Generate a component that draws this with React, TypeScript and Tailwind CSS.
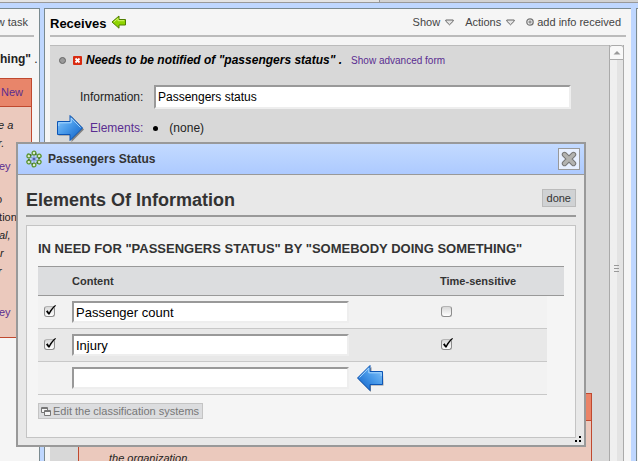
import type { ReactNode } from "react";

const font = "font-['Liberation_Sans',Arial,sans-serif]";
const sunken =
  "border-2 border-t-[#999] border-l-[#999] border-r-[#eee] border-b-[#eee] bg-white text-black outline-none";

function BlueArrow({ flip = false }: { flip?: boolean }) {
  const id = flip ? "arrowLeft" : "arrowRight";
  return (
    <svg width="28" height="28" viewBox="0 0 28 28" className="shrink-0" aria-hidden="true">
      <defs>
        <linearGradient id={id} x1="0" y1="0" x2="1" y2="1">
          <stop offset="0" stopColor="#8cc8fa" />
          <stop offset="0.45" stopColor="#4a9bea" />
          <stop offset="1" stopColor="#0a5cc4" />
        </linearGradient>
      </defs>
      <path
        d={flip ? "M27 8.500H15.500V3L2.500 15.500L15 28V21.500H27.500Z" : "M2.500 8.500H15.500V2L28 15.500L15.500 28V21.500H2.500Z"}
        fill="#000"
        opacity="0.4"
      />
      <g transform={flip ? "translate(28 0) scale(-1 1)" : undefined}>
        <path d="M1.500 7.500H14V1.500L26.500 14L14 26.500V20.500H1.500Z" fill={`url(#${id})`} stroke="#0c55b5" />
        <path d="M2.800 12V8.800H15.200V4L24.500 13.500" fill="none" stroke="#a5d6ff" strokeWidth="1" />
      </g>
    </svg>
  );
}

function GreenArrow() {
  return (
    <svg width="16" height="14" viewBox="0 0 16 14" aria-hidden="true">
      <path d="M1 7L8 1V4.500H14.500V10H8V13.200Z" fill="#8fd400" stroke="#4f7d00" />
      <path d="M2.800 7L7 3.400V5.700H13.300" fill="none" stroke="#d2f56c" />
    </svg>
  );
}

function Caret() {
  return (
    <svg width="9" height="7" viewBox="0 0 9 7" aria-hidden="true">
      <path d="M0.800 1H8.200V2.200L4.500 5.800L0.800 2.200Z" fill="#e4e4e4" stroke="#666" />
    </svg>
  );
}

function Flower() {
  const petals = [0, 60, 120, 180, 240, 300];
  return (
    <svg width="18" height="18" viewBox="0 0 18 18" aria-hidden="true">
      {petals.map((a) => (
        <g key={a} transform={`rotate(${a} 9 9)`}>
          <path d="M9 9V5" stroke="#7f9cc8" />
          <circle cx="9" cy="3" r="1.900" fill="#dcebd0" stroke="#5c9632" strokeWidth="1.300" />
          <circle cx="10.900" cy="4.200" r="0.900" fill="#47702c" />
        </g>
      ))}
      <circle cx="9" cy="9" r="1.900" fill="#8c9fd8" />
      <circle cx="9" cy="9" r="0.900" fill="#3a3f96" />
    </svg>
  );
}

function Tick({ label, checked = false }: { label: string; checked?: boolean }) {
  return (
    <span className="relative mb-[2px] block size-[11px]">
      <input
        type="checkbox"
        aria-label={label}
        defaultChecked={checked}
        className="peer block size-[11px] appearance-none rounded-[3px] border border-[#8d8d8d] border-t-[#b5b5b5] bg-linear-to-b from-[#d8d8d8] to-white"
      />
      <svg
        viewBox="0 0 13 12"
        width="13"
        height="12"
        className="pointer-events-none absolute -top-px left-0 hidden peer-checked:block"
        aria-hidden="true"
      >
        <path d="M2 6.500L3.600 5.300L5 7.500C6.500 4.500 8.500 2 11.300 0L12 0.800C9 3.500 7 6.500 5.600 9.500H4.300Z" fill="#000" />
      </svg>
    </span>
  );
}

function MenuButton({ children }: { children: ReactNode }) {
  return (
    <button type="button" className="flex items-center gap-[5px]">
      {children}
      <Caret />
    </button>
  );
}

function TaskPanel() {
  return (
    <aside className="w-10 shrink-0 overflow-hidden border-t border-r border-[#7a8a90] bg-[#f5f5f5] whitespace-nowrap">
      <header className="mr-[5px] flex h-7 items-center justify-end border-b-2 border-[#bbb] pr-[6px]">
        <button type="button" className="text-[11px] text-[#444]">w task</button>
      </header>
      <p className="mt-[14px] mr-[5px] text-[12px] leading-4 font-bold">
        hing" <span className="font-normal">.</span>
      </p>
      <section className="mt-[11px] mr-[7px] h-[260px] border border-l-0 border-[#c0492f] bg-[#ebc9bd] text-[11px] leading-[18px]">
        <div className="h-[28px] border-b border-[#c0492f] bg-[#e8856a] pl-px leading-[27px]">
          <a href="#new" className="text-[#5a2d91]">New</a>
        </div>
        <p className="pt-[9px] -indent-[2px] italic">e a</p>
        <p className="-indent-[2px] italic">r.</p>
        <a href="#survey" className="mt-[5px] block -indent-px text-[#5a2d91]">ey</a>
        <p className="mt-[15px] -indent-[4px]">o</p>
        <p className="-indent-[7px]">ation</p>
        <p className="-indent-px italic">al,</p>
        <p className="italic">r</p>
        <p className="-indent-[2px] italic">r</p>
        <a href="#survey-2" className="mt-[23px] block -indent-px text-[#5a2d91]">ey</a>
      </section>
    </aside>
  );
}

function ScrollBar() {
  return (
    <div className="flex w-[15px] shrink-0 flex-col border-x border-[#aaa] bg-linear-to-r from-[#efefef] from-50% to-[#e3e3e3] to-50%">
      <button
        type="button"
        aria-label="Scroll up"
        className="-mx-px flex h-[15px] shrink-0 items-center justify-center rounded-t-[3px] border border-[#aaa] bg-[#f8f8f8]"
      >
        <svg width="8" height="5" viewBox="0 0 8 5" aria-hidden="true">
          <path d="M0.500 4.500L4 1L7.500 4.500Z" fill="#999" />
        </svg>
      </button>
      <div className="mt-[205px] ml-1 flex flex-col gap-[2px]">
        <i className="h-px w-[5px] bg-[#999]" />
        <i className="h-px w-[5px] bg-[#999]" />
        <i className="h-px w-[5px] bg-[#999]" />
      </div>
    </div>
  );
}

function ReceivesPanel() {
  return (
    <main className="flex min-w-0 flex-1 flex-col overflow-hidden border-t border-l border-[#7a8a90] bg-[#f5f5f5] pr-[5px] pl-[5px]">
      <header className="flex h-7 shrink-0 items-center border-b-2 border-[#bbb] pr-[5px] text-[11px] text-[#444]">
        <h2 className="mr-[5px] pt-[3px] text-[13px] font-bold text-black">Receives</h2>
        <GreenArrow />
        <nav className="ml-auto flex items-center gap-[11px]">
          <MenuButton>Show</MenuButton>
          <MenuButton>Actions</MenuButton>
          <button type="button" className="flex items-center gap-[3px]">
            <svg width="8" height="8" viewBox="0 0 8 8" aria-hidden="true">
              <circle cx="4" cy="4" r="3.200" fill="#eee" stroke="#777" strokeWidth="1.300" />
              <path d="M4 2.300V5.700M2.300 4H5.700" stroke="#777" />
            </svg>
            add info received
          </button>
        </nav>
      </header>
      <div className="mt-2 mr-[2px] flex min-h-0 flex-1">
        <div className="flex min-w-0 flex-1 flex-col overflow-hidden border-t border-[#bbb] bg-[#d8d8d8] text-[12px]">
          <div className="mt-[6px] flex h-4 shrink-0 items-center">
            <span className="ml-[9px] size-[7px] rounded-full border border-[#666] bg-[#999]" />
            <button type="button" aria-label="Remove" className="ml-[7px]">
              <svg width="9" height="9" viewBox="0 0 9 9" className="block">
                <rect width="9" height="9" rx="1" fill="#d92a10" />
                <path d="M2.500 2.500L6.500 6.500M6.500 2.500L2.500 6.500" stroke="#fff" strokeWidth="1.800" />
              </svg>
            </button>
            <strong className="ml-1 text-black italic">Needs to be notified of "passengers status" .</strong>
            <a href="#advanced" className="ml-[9px] text-[10px] text-[#5a2d91]">Show advanced form</a>
          </div>
          <div className="mt-[17px] flex h-6 shrink-0 items-center pl-[30px]">
            <label htmlFor="information" className="w-[74px]">Information:</label>
            <input
              id="information"
              defaultValue="Passengers status"
              className={`mr-[38px] h-6 min-w-0 flex-1 pl-[2px] ${sunken}`}
            />
          </div>
          <div className="mt-[5px] flex h-7 shrink-0 items-center pl-[6px]">
            <BlueArrow />
            <a href="#elements" className="ml-[6px] text-[#5a2d91]">Elements:</a>
            <span className="ml-[10px] size-[5px] rounded-full bg-black" />
            <span className="ml-[11px]">(none)</span>
          </div>
          <section className="mt-[251px] mr-[17px] ml-7 flex-1 border border-b-0 border-[#c0492f] bg-[#ebc9bd]">
            <div className="h-[27px] border-b border-[#c0492f] bg-[#ea8367]" />
            <p className="pt-[29px] pl-[30px] text-[11px] leading-4 italic">the organization.</p>
          </section>
        </div>
        <ScrollBar />
      </div>
    </main>
  );
}

function ElementRow({ value, index, timed, shade }: { value?: string; index: number; timed?: boolean; shade: string }) {
  return (
    <tr className="h-[33px]">
      <td className={`border-b border-[#c8c8c8] py-0 pr-0 pl-[6px] ${shade}`}>
        {value && <Tick label={`Keep ${value}`} checked />}
      </td>
      <td className={`border-b border-[#c8c8c8] p-0 ${shade}`}>
        <div className="flex h-7 items-center gap-[7px]">
          <input
            aria-label={`Content ${index}`}
            defaultValue={value}
            className={`h-[22px] w-[277px] pl-[2px] text-[13px] ${sunken}`}
          />
          {!value && <BlueArrow flip />}
        </div>
      </td>
      <td className={`border-b border-[#c8c8c8] py-0 pr-0 pl-px ${shade}`}>
        {value && <Tick label={`${value} is time-sensitive`} checked={timed} />}
      </td>
    </tr>
  );
}

function ElementsDialog() {
  return (
    <div
      role="dialog"
      aria-label="Passengers Status"
      className="absolute top-[142px] right-[52px] left-4 border-2 border-[#999] bg-[#e8e8e8] text-[#333]"
    >
      <header className="flex h-[31px] items-center border-b border-[#999] bg-linear-to-b from-[#c3daff] to-[#adcaff] pr-1 pl-[7px]">
        <Flower />
        <strong className="ml-[5px] text-[12px]">Passengers Status</strong>
        <button
          type="button"
          aria-label="Close"
          className="ml-auto flex size-[22px] items-center justify-center border border-[#999] bg-[#e8f0ff]"
        >
          <svg width="16" height="16" viewBox="0 0 16 16">
            <path d="M3.500 3.500L12.500 12.500M12.500 3.500L3.500 12.500" stroke="#777" strokeWidth="5.400" strokeLinecap="round" />
            <path d="M3.500 3.500L12.500 12.500M12.500 3.500L3.500 12.500" stroke="#b3b3b0" strokeWidth="3.400" strokeLinecap="round" />
          </svg>
        </button>
      </header>
      <div className="px-2 pb-[7px]">
        <div className="flex h-[42px] items-center justify-between border-b-2 border-[#999]">
          <h1 className="pt-[9px] text-[18px] leading-6 font-bold">Elements Of Information</h1>
          <button type="button" className="mt-[6px] h-[18px] border border-[#bbb] bg-[#d0d2d4] px-1 text-[11px] leading-4">
            done
          </button>
        </div>
        <section className="mt-2 border border-[#c4c4c4] bg-[#f5f5f5] px-[11px] pb-[18px]">
          <h3 className="pt-[14px] text-[13px] leading-[18px] font-bold whitespace-nowrap">
            IN NEED FOR "PASSENGERS STATUS" BY "SOMEBODY DOING SOMETHING"
          </h3>
          <table className="mt-2 w-full table-fixed border-separate border-spacing-0 text-left">
            <thead>
              <tr className="h-[30px] text-[11px]">
                <th className="w-[34px] border-y border-[#999] bg-[#dcdddf]" />
                <th className="border-y border-[#999] bg-[#dcdddf]">Content</th>
                <th className="w-[107px] border-y border-[#999] bg-[#dcdddf]">Time-sensitive</th>
                <th className="w-[17px] border-y border-[#999] bg-[#dcdddf]" />
              </tr>
            </thead>
            <tbody>
              <ElementRow index={1} value="Passenger count" shade="bg-[#f2f2f2]" />
              <ElementRow index={2} value="Injury" timed shade="bg-[#e8e8e8]" />
              <ElementRow index={3} shade="bg-[#f2f2f2]" />
            </tbody>
          </table>
          <button
            type="button"
            className="mt-2 flex h-4 items-center gap-[2px] border border-[#c4c4c4] bg-[#dcdddf] pr-[3px] pl-[2px] text-[11px] leading-[14px] text-[#777]"
          >
            <svg width="10" height="9" viewBox="0 0 10 9" fill="#f5f5f5" stroke="#777" aria-hidden="true">
              <path d="M0.500 0.500H6.500V5.500H0.500ZM0.500 1.500H6.500" />
              <path d="M3.500 3.500H9.500V8.500H3.500ZM3.500 4.500H9.500" />
            </svg>
            Edit the classification systems
          </button>
        </section>
      </div>
      <svg width="6" height="6" viewBox="0 0 6 6" className="absolute right-[3px] bottom-[3px]" aria-hidden="true">
        <path d="M4 0H6V2H4ZM4 4H6V6H4ZM0 4H2V6H0Z" fill="#000" />
      </svg>
    </div>
  );
}

export default function App() {
  return (
    <div className={`relative flex h-screen flex-col overflow-hidden bg-[#bfd7ff] text-[#222] ${font}`}>
      <div className="flex h-[3px] shrink-0 border-b border-[#999]">
        <div className="flex-[380] bg-[#e4e4e4]" />
        <div className="flex-[258] border-l border-[#999] bg-[#d2d2d2]" />
      </div>
      <div className="flex min-h-0 flex-1 gap-1 pt-[5px]">
        <TaskPanel />
        <ReceivesPanel />
        <div className="ml-px w-[2px] shrink-0 border-t border-l border-[#7a8a90] bg-[#f5f5f5]" />
      </div>
      <ElementsDialog />
    </div>
  );
}
